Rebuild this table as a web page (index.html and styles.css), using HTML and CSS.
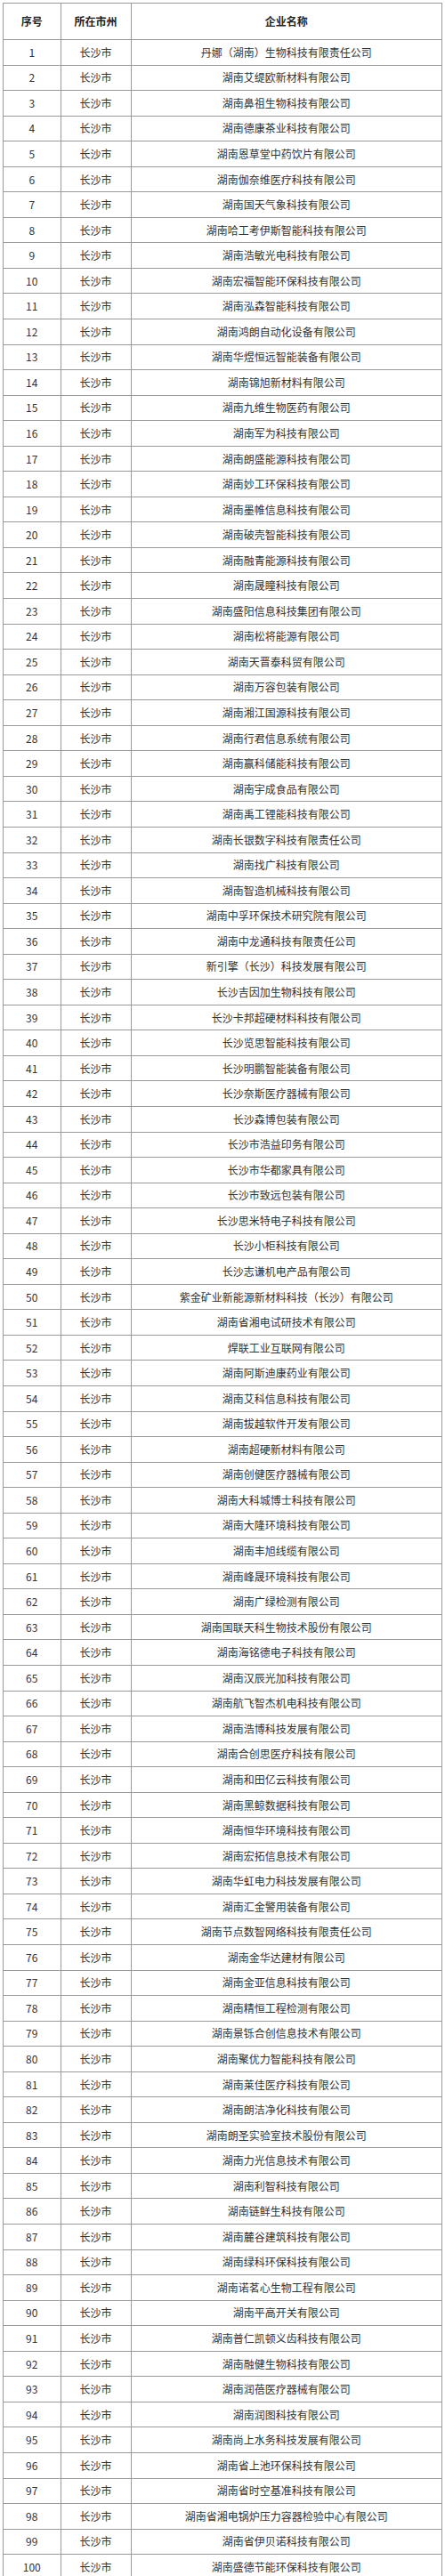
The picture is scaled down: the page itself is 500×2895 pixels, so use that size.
FILE: index.html
```html
<!DOCTYPE html>
<html lang="zh-CN">
<head>
<meta charset="utf-8">
<title>企业名单</title>
<link rel="stylesheet" href="styles.css">
</head>
<body>
<table class="list">
<colgroup><col class="c-no"><col class="c-city"><col class="c-name"></colgroup>
<thead>
<tr><th>序号</th><th>所在市州</th><th>企业名称</th></tr>
</thead>
<tbody>
<tr><td>1</td><td>长沙市</td><td>丹娜（湖南）生物科技有限责任公司</td></tr>
<tr><td>2</td><td>长沙市</td><td>湖南艾缇欧新材料有限公司</td></tr>
<tr><td>3</td><td>长沙市</td><td>湖南鼻祖生物科技有限公司</td></tr>
<tr><td>4</td><td>长沙市</td><td>湖南德康茶业科技有限公司</td></tr>
<tr><td>5</td><td>长沙市</td><td>湖南恩草堂中药饮片有限公司</td></tr>
<tr><td>6</td><td>长沙市</td><td>湖南伽奈维医疗科技有限公司</td></tr>
<tr><td>7</td><td>长沙市</td><td>湖南国天气象科技有限公司</td></tr>
<tr><td>8</td><td>长沙市</td><td>湖南哈工考伊斯智能科技有限公司</td></tr>
<tr><td>9</td><td>长沙市</td><td>湖南浩敏光电科技有限公司</td></tr>
<tr><td>10</td><td>长沙市</td><td>湖南宏福智能环保科技有限公司</td></tr>
<tr><td>11</td><td>长沙市</td><td>湖南泓森智能科技有限公司</td></tr>
<tr><td>12</td><td>长沙市</td><td>湖南鸿朗自动化设备有限公司</td></tr>
<tr><td>13</td><td>长沙市</td><td>湖南华煜恒远智能装备有限公司</td></tr>
<tr><td>14</td><td>长沙市</td><td>湖南锦旭新材料有限公司</td></tr>
<tr><td>15</td><td>长沙市</td><td>湖南九维生物医药有限公司</td></tr>
<tr><td>16</td><td>长沙市</td><td>湖南军为科技有限公司</td></tr>
<tr><td>17</td><td>长沙市</td><td>湖南朗盛能源科技有限公司</td></tr>
<tr><td>18</td><td>长沙市</td><td>湖南妙工环保科技有限公司</td></tr>
<tr><td>19</td><td>长沙市</td><td>湖南墨帷信息科技有限公司</td></tr>
<tr><td>20</td><td>长沙市</td><td>湖南破壳智能科技有限公司</td></tr>
<tr><td>21</td><td>长沙市</td><td>湖南融青能源科技有限公司</td></tr>
<tr><td>22</td><td>长沙市</td><td>湖南晟瞳科技有限公司</td></tr>
<tr><td>23</td><td>长沙市</td><td>湖南盛阳信息科技集团有限公司</td></tr>
<tr><td>24</td><td>长沙市</td><td>湖南松将能源有限公司</td></tr>
<tr><td>25</td><td>长沙市</td><td>湖南天晋泰科贸有限公司</td></tr>
<tr><td>26</td><td>长沙市</td><td>湖南万容包装有限公司</td></tr>
<tr><td>27</td><td>长沙市</td><td>湖南湘江国源科技有限公司</td></tr>
<tr><td>28</td><td>长沙市</td><td>湖南行君信息系统有限公司</td></tr>
<tr><td>29</td><td>长沙市</td><td>湖南赢科储能科技有限公司</td></tr>
<tr><td>30</td><td>长沙市</td><td>湖南宇成食品有限公司</td></tr>
<tr><td>31</td><td>长沙市</td><td>湖南禹工锂能科技有限公司</td></tr>
<tr><td>32</td><td>长沙市</td><td>湖南长银数字科技有限责任公司</td></tr>
<tr><td>33</td><td>长沙市</td><td>湖南找广科技有限公司</td></tr>
<tr><td>34</td><td>长沙市</td><td>湖南智造机械科技有限公司</td></tr>
<tr><td>35</td><td>长沙市</td><td>湖南中孚环保技术研究院有限公司</td></tr>
<tr><td>36</td><td>长沙市</td><td>湖南中龙通科技有限责任公司</td></tr>
<tr><td>37</td><td>长沙市</td><td>新引擎（长沙）科技发展有限公司</td></tr>
<tr><td>38</td><td>长沙市</td><td>长沙吉因加生物科技有限公司</td></tr>
<tr><td>39</td><td>长沙市</td><td>长沙卡邦超硬材料科技有限公司</td></tr>
<tr><td>40</td><td>长沙市</td><td>长沙览思智能科技有限公司</td></tr>
<tr><td>41</td><td>长沙市</td><td>长沙明鹏智能装备有限公司</td></tr>
<tr><td>42</td><td>长沙市</td><td>长沙奈斯医疗器械有限公司</td></tr>
<tr><td>43</td><td>长沙市</td><td>长沙森博包装有限公司</td></tr>
<tr><td>44</td><td>长沙市</td><td>长沙市浩益印务有限公司</td></tr>
<tr><td>45</td><td>长沙市</td><td>长沙市华都家具有限公司</td></tr>
<tr><td>46</td><td>长沙市</td><td>长沙市致远包装有限公司</td></tr>
<tr><td>47</td><td>长沙市</td><td>长沙思米特电子科技有限公司</td></tr>
<tr><td>48</td><td>长沙市</td><td>长沙小柜科技有限公司</td></tr>
<tr><td>49</td><td>长沙市</td><td>长沙志谦机电产品有限公司</td></tr>
<tr><td>50</td><td>长沙市</td><td>紫金矿业新能源新材料科技（长沙）有限公司</td></tr>
<tr><td>51</td><td>长沙市</td><td>湖南省湘电试研技术有限公司</td></tr>
<tr><td>52</td><td>长沙市</td><td>焊联工业互联网有限公司</td></tr>
<tr><td>53</td><td>长沙市</td><td>湖南阿斯迪康药业有限公司</td></tr>
<tr><td>54</td><td>长沙市</td><td>湖南艾科信息科技有限公司</td></tr>
<tr><td>55</td><td>长沙市</td><td>湖南拔越软件开发有限公司</td></tr>
<tr><td>56</td><td>长沙市</td><td>湖南超硬新材料有限公司</td></tr>
<tr><td>57</td><td>长沙市</td><td>湖南创健医疗器械有限公司</td></tr>
<tr><td>58</td><td>长沙市</td><td>湖南大科城博士科技有限公司</td></tr>
<tr><td>59</td><td>长沙市</td><td>湖南大隆环境科技有限公司</td></tr>
<tr><td>60</td><td>长沙市</td><td>湖南丰旭线缆有限公司</td></tr>
<tr><td>61</td><td>长沙市</td><td>湖南峰晟环境科技有限公司</td></tr>
<tr><td>62</td><td>长沙市</td><td>湖南广绿检测有限公司</td></tr>
<tr><td>63</td><td>长沙市</td><td>湖南国联天科生物技术股份有限公司</td></tr>
<tr><td>64</td><td>长沙市</td><td>湖南海铭德电子科技有限公司</td></tr>
<tr><td>65</td><td>长沙市</td><td>湖南汉辰光加科技有限公司</td></tr>
<tr><td>66</td><td>长沙市</td><td>湖南航飞智杰机电科技有限公司</td></tr>
<tr><td>67</td><td>长沙市</td><td>湖南浩博科技发展有限公司</td></tr>
<tr><td>68</td><td>长沙市</td><td>湖南合创思医疗科技有限公司</td></tr>
<tr><td>69</td><td>长沙市</td><td>湖南和田亿云科技有限公司</td></tr>
<tr><td>70</td><td>长沙市</td><td>湖南黑鲸数据科技有限公司</td></tr>
<tr><td>71</td><td>长沙市</td><td>湖南恒华环境科技有限公司</td></tr>
<tr><td>72</td><td>长沙市</td><td>湖南宏拓信息技术有限公司</td></tr>
<tr><td>73</td><td>长沙市</td><td>湖南华虹电力科技发展有限公司</td></tr>
<tr><td>74</td><td>长沙市</td><td>湖南汇金警用装备有限公司</td></tr>
<tr><td>75</td><td>长沙市</td><td>湖南节点数智网络科技有限责任公司</td></tr>
<tr><td>76</td><td>长沙市</td><td>湖南金华达建材有限公司</td></tr>
<tr><td>77</td><td>长沙市</td><td>湖南金亚信息科技有限公司</td></tr>
<tr><td>78</td><td>长沙市</td><td>湖南精恒工程检测有限公司</td></tr>
<tr><td>79</td><td>长沙市</td><td>湖南景铄合创信息技术有限公司</td></tr>
<tr><td>80</td><td>长沙市</td><td>湖南聚优力智能科技有限公司</td></tr>
<tr><td>81</td><td>长沙市</td><td>湖南莱佳医疗科技有限公司</td></tr>
<tr><td>82</td><td>长沙市</td><td>湖南朗洁净化科技有限公司</td></tr>
<tr><td>83</td><td>长沙市</td><td>湖南朗圣实验室技术股份有限公司</td></tr>
<tr><td>84</td><td>长沙市</td><td>湖南力光信息技术有限公司</td></tr>
<tr><td>85</td><td>长沙市</td><td>湖南利智科技有限公司</td></tr>
<tr><td>86</td><td>长沙市</td><td>湖南链鲜生科技有限公司</td></tr>
<tr><td>87</td><td>长沙市</td><td>湖南麓谷建筑科技有限公司</td></tr>
<tr><td>88</td><td>长沙市</td><td>湖南绿科环保科技有限公司</td></tr>
<tr><td>89</td><td>长沙市</td><td>湖南诺茗心生物工程有限公司</td></tr>
<tr><td>90</td><td>长沙市</td><td>湖南平高开关有限公司</td></tr>
<tr><td>91</td><td>长沙市</td><td>湖南普仁凯顿义齿科技有限公司</td></tr>
<tr><td>92</td><td>长沙市</td><td>湖南融健生物科技有限公司</td></tr>
<tr><td>93</td><td>长沙市</td><td>湖南润蓓医疗器械有限公司</td></tr>
<tr><td>94</td><td>长沙市</td><td>湖南润图科技有限公司</td></tr>
<tr><td>95</td><td>长沙市</td><td>湖南尚上水务科技发展有限公司</td></tr>
<tr><td>96</td><td>长沙市</td><td>湖南省上池环保科技有限公司</td></tr>
<tr><td>97</td><td>长沙市</td><td>湖南省时空基准科技有限公司</td></tr>
<tr><td>98</td><td>长沙市</td><td>湖南省湘电锅炉压力容器检验中心有限公司</td></tr>
<tr><td>99</td><td>长沙市</td><td>湖南省伊贝诺科技有限公司</td></tr>
<tr><td>100</td><td>长沙市</td><td>湖南盛德节能环保科技有限公司</td></tr>
</tbody>
</table>
</body>
</html>
```

FILE: styles.css
```css
html, body {
  margin: 0;
  padding: 0;
  background: #ffffff;
}

body {
  padding: 3px 3px 0 3px;
  font-family: "Noto Sans CJK SC", "Noto Sans", sans-serif;
  color: #333333;
}

.list {
  width: 494px;
  table-layout: fixed;
  border-collapse: collapse;
  border: 1px solid #777777;
  font-size: 12px;
}

.c-no { width: 64.5px; }
.c-city { width: 79px; }
.c-name { width: auto; }

.list th,
.list td {
  border: 1px solid #9a9a9a;
  padding: 0;
  text-align: center;
  vertical-align: middle;
  line-height: 1;
  white-space: nowrap;
  overflow: hidden;
}

.list thead tr {
  height: 41px;
}

.list th {
  font-weight: bold;
  color: #222222;
  font-size: 12px;
}

.list tbody tr {
  height: 28.55px;
}
```
